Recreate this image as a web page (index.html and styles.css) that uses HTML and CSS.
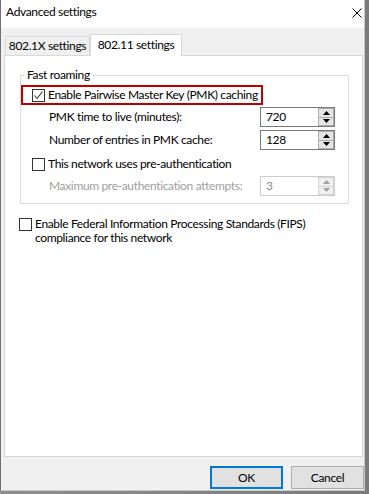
FILE: index.html
```html
<!DOCTYPE html>
<html>
<head>
<meta charset="utf-8">
<link rel="stylesheet" href="styles.css">
</head>
<body>
<div class="frame">
  <div class="window">
    <div class="titlebar">
      <span class="title">Advanced settings</span>
      <svg class="close" width="10" height="10" viewBox="0 0 10 10"><path d="M0.5 0.5 L9.5 9.5 M9.5 0.5 L0.5 9.5" stroke="#000" stroke-width="1" fill="none"/></svg>
    </div>
    <div class="tabs">
      <div class="tab">802.1X settings</div>
      <div class="tab active">802.11 settings</div>
    </div>
    <div class="panel">
      <fieldset class="group">
        <legend>Fast roaming</legend>
        <div class="row highlight">
          <span class="cb"><svg width="11" height="11" viewBox="0 0 11 11"><path d="M1.5 5.5 L4 8.5 L9.5 1.5" stroke="#333" stroke-width="1.1" fill="none"/></svg></span>
          <span class="cblabel">Enable Pairwise Master Key (PMK) caching</span>
        </div>
        <div class="row field first">
          <span class="flabel">PMK time to live (minutes):</span>
          <div class="spin">
            <span class="value">720</span>
            <span class="arrows"><span class="arr"><svg width="7" height="4" viewBox="0 0 7 4"><polygon points="0,4 7,4 3.5,0" fill="#000"/></svg></span><span class="arr"><svg width="7" height="4" viewBox="0 0 7 4"><polygon points="0,0 7,0 3.5,4" fill="#000"/></svg></span></span>
          </div>
        </div>
        <div class="row field second">
          <span class="flabel">Number of entries in PMK cache:</span>
          <div class="spin">
            <span class="value">128</span>
            <span class="arrows"><span class="arr"><svg width="7" height="4" viewBox="0 0 7 4"><polygon points="0,4 7,4 3.5,0" fill="#000"/></svg></span><span class="arr"><svg width="7" height="4" viewBox="0 0 7 4"><polygon points="0,0 7,0 3.5,4" fill="#000"/></svg></span></span>
          </div>
        </div>
        <div class="row check">
          <span class="cb"></span>
          <span class="cblabel">This network uses pre-authentication</span>
        </div>
        <div class="row field disabled">
          <span class="flabel">Maximum pre-authentication attempts:</span>
          <div class="spin">
            <span class="value">3</span>
            <span class="arrows"><span class="arr"><svg width="7" height="4" viewBox="0 0 7 4"><polygon points="0,4 7,4 3.5,0" fill="#a0a0a0"/></svg></span><span class="arr"><svg width="7" height="4" viewBox="0 0 7 4"><polygon points="0,0 7,0 3.5,4" fill="#a0a0a0"/></svg></span></span>
          </div>
        </div>
      </fieldset>
      <div class="fips">
        <span class="cb"></span>
        <span class="fipslabel"><span class="line">Enable Federal Information Processing Standards (FIPS)</span><span class="line">compliance for this network</span></span>
      </div>
    </div>
    <div class="buttons">
      <button class="btn default">OK</button>
      <button class="btn">Cancel</button>
    </div>
  </div>
</div>
</body>
</html>
```
FILE: styles.css
```css
* { box-sizing: border-box; }
html, body { margin: 0; padding: 0; }
body {
  font-family: Lato, "Noto Sans", "Liberation Sans", sans-serif;
  font-size: 12px;
  line-height: 16px;
  letter-spacing: -0.35px;
  color: #000;
  background: #fff;
  white-space: nowrap;
}
.frame {
  width: 369px;
  height: 494px;
  padding: 0 4px 3px 0;
  background: linear-gradient(90deg, #8f8f8f, #7a7a7a);
  display: flex;
}
.window {
  flex: 1;
  display: flex;
  flex-direction: column;
  background: #f0f0f0;
  border-left: 1px solid #707070;
  border-right: 1px solid #c8c8c8;
  border-bottom: 1px solid #c8c8c8;
}
.titlebar {
  height: 28px;
  flex: none;
  background: #fff;
  display: flex;
  align-items: flex-start;
  padding-left: 5px;
}
.title {
  margin-top: 4px;
  line-height: 16px;
}
.close {
  margin-left: auto;
  margin-right: 2px;
  margin-top: 8px;
}
.tabs {
  flex: none;
  margin-top: 6px;
  height: 22px;
  margin-bottom: -1px;
  padding-left: 4px;
  display: flex;
  align-items: flex-end;
  position: relative;
  z-index: 1;
}
.tab {
  height: 20px;
  width: 85px;
  border: 1px solid #d9d9d9;
  background: #f0f0f0;
  text-align: center;
  line-height: 18px;
}
.tab.active {
  height: 22px;
  width: 92px;
  background: #fff;
  border-bottom: none;
  line-height: 20px;
}
.panel {
  flex: 1;
  margin: 0 1px 0 3px;
  border: 1px solid #d9d9d9;
  background: #fff;
  display: flex;
  flex-direction: column;
}
.group {
  margin: 11px 13px 0 15px;
  padding: 0 0 7px 0;
  border: 1px solid #dcdcdc;
  min-width: 0;
}
.group legend {
  margin-left: 4px;
  padding: 0 2px;
  line-height: 16px;
}
.row {
  display: flex;
  align-items: center;
}
.cb {
  width: 13px;
  height: 13px;
  flex: none;
  border: 1px solid #333;
  background: #fff;
  display: flex;
  align-items: center;
  justify-content: center;
}
.highlight {
  margin-top: 2px;
  width: 242px;
  height: 20px;
  border: 2px solid #c00000;
  padding-left: 9px;
}
.cblabel { margin-left: 3px; }
.field {
  height: 20px;
  padding-left: 28px;
  padding-right: 13px;
  justify-content: space-between;
}
.field.first { margin-top: 2px; }
.field.second { margin-top: 3px; }
.check {
  margin-top: 6px;
  height: 16px;
  padding-left: 11px;
}
.field.disabled { margin-top: 4px; }
.disabled .flabel { color: #a0a0a0; }
.spin {
  width: 75px;
  height: 20px;
  border: 1px solid #7a7a7a;
  display: flex;
  align-items: stretch;
}
.value {
  flex: 1;
  padding-left: 5px;
  line-height: 18px;
}
.arrows {
  width: 16px;
  display: flex;
  flex-direction: column;
}
.arr {
  flex: 1;
  border: 1px solid #adadad;
  background: #e5e5e5;
  display: flex;
  align-items: center;
  justify-content: center;
}
.arr + .arr { border-top: none; }
.disabled .spin { border-color: #cccccc; }
.disabled .value { color: #8a8a8a; }
.disabled .arr { border-color: #d4d4d4; background: #f0f0f0; }
.fips {
  margin: 13px 0 0 14px;
  display: flex;
  align-items: flex-start;
}
.fips .cb { margin-top: 1px; }
.fipslabel {
  margin-left: 3px;
  display: flex;
  flex-direction: column;
}
.line { line-height: 14px; }
.buttons {
  flex: none;
  height: 33px;
  padding-top: 9px;
  display: flex;
  justify-content: flex-end;
  gap: 8px;
}
.btn {
  width: 73px;
  height: 23px;
  font-family: inherit;
  font-size: 12px;
  letter-spacing: -0.35px;
  color: #000;
  background: #e1e1e1;
  border: 1px solid #adadad;
  padding: 0;
  margin: 0;
}
.btn.default {
  border: 2px solid #0078d7;
}
```
